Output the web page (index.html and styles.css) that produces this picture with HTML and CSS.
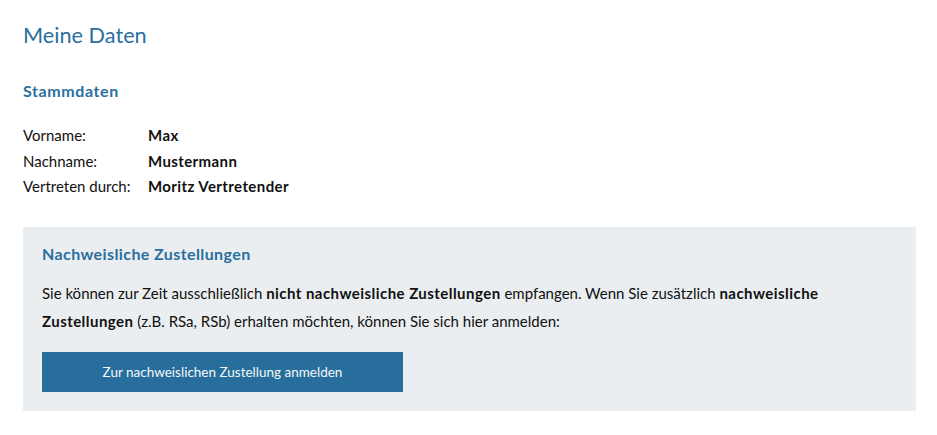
FILE: index.html
```html
<!DOCTYPE html>
<html lang="de">
<head>
<meta charset="utf-8">
<title>Meine Daten</title>
<link rel="stylesheet" href="styles.css">
</head>
<body>
<main class="page">
  <h1 class="page-title">Meine Daten</h1>
  <section class="master">
    <h2 class="section-title">Stammdaten</h2>
    <dl class="data-list">
      <dt>Vorname:</dt><dd>Max</dd>
      <dt>Nachname:</dt><dd>Mustermann</dd>
      <dt>Vertreten durch:</dt><dd>Moritz Vertretender</dd>
    </dl>
  </section>
  <section class="panel">
    <h2 class="section-title panel-title">Nachweisliche Zustellungen</h2>
    <p class="panel-text">Sie können zur Zeit ausschließlich <strong>nicht nachweisliche Zustellungen</strong> empfangen. Wenn Sie zusätzlich <strong>nachweisliche</strong> <strong>Zustellungen</strong> (z.B. RSa, RSb) erhalten möchten, können Sie sich hier anmelden:</p>
    <button class="btn" type="button">Zur nachweislichen Zustellung anmelden</button>
  </section>
</main>
</body>
</html>
```
FILE: styles.css
```css
html, body {
  margin: 0;
  padding: 0;
  background: #ffffff;
}
body {
  font-family: Lato, "Open Sans", sans-serif;
  color: #111111;
  font-size: 15px;
}
.page {
  padding: 20px 21px 0 23px;
}
.page-title {
  margin: 0;
  font-size: 21.7px;
  font-weight: 400;
  color: #2a6f9e;
  line-height: 30px;
}
.master {
  margin-top: 30px;
}
.section-title {
  margin: 0;
  font-size: 16px;
  font-weight: 700;
  color: #2a6f9e;
  line-height: 22px;
  letter-spacing: 0.6px;
}
.panel-title {
  letter-spacing: 0.4px;
}
.data-list {
  display: grid;
  grid-template-columns: 125px 1fr;
  row-gap: 0;
  margin: 21px 0 0;
  line-height: 25.5px;
}
.data-list dt {
  margin: 0;
}
.data-list dd {
  margin: 0;
  font-weight: 700;
  letter-spacing: 0.4px;
}
.panel {
  margin-top: 27px;
  background: #ebeef0;
  padding: 16px 19px 19px;
}
.panel-text {
  margin: 14px 0 0;
  line-height: 28px;
}
.panel-text strong {
  font-weight: 700;
  letter-spacing: 0.45px;
}
.btn {
  display: block;
  margin-top: 17px;
  width: 361px;
  height: 40px;
  border: 0;
  background: #286e9c;
  color: #f4f7fa;
  font-family: inherit;
  font-size: 13.5px;
  cursor: pointer;
}
```
